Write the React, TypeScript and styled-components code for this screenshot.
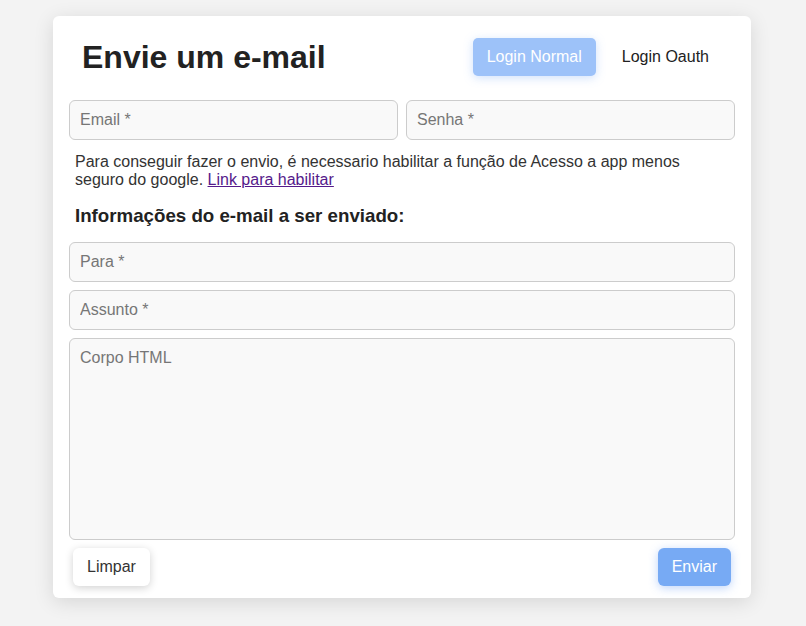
import styled, { createGlobalStyle } from 'styled-components'

const GlobalStyle = createGlobalStyle`
  html, body {
    margin: 0;
    padding: 0;
    background: #f3f3f3;
    font-family: 'Liberation Sans', Arial, sans-serif;
  }
`

const Page = styled.div`
  width: 806px;
  height: 626px;
  padding: 16px 0 0 53px;
  box-sizing: border-box;
  display: flex;
  align-items: flex-start;
`

const Card = styled.form`
  width: 698px;
  height: 582px;
  box-sizing: border-box;
  background: #fff;
  border-radius: 6px;
  box-shadow: 0 4px 20px rgba(0, 0, 0, 0.12);
  padding: 16px 16px 12px;
  display: flex;
  flex-direction: column;
`

const Header = styled.div`
  height: 50px;
  margin-bottom: 18px;
  padding: 0 12px 0 13px;
  display: flex;
  align-items: center;
  justify-content: space-between;
`

const Title = styled.h1`
  margin: 0;
  font-size: 32px;
  font-weight: 700;
  color: #222;
`

const Tabs = styled.div`
  display: flex;
  gap: 12px;
`

const Tab = styled.button<{ $active?: boolean }>`
  font-family: inherit;
  font-size: 16px;
  height: 38px;
  padding: 0 14px;
  border: none;
  border-radius: 5px;
  cursor: pointer;
  background: ${(p) => (p.$active ? '#9dc2f9' : 'transparent')};
  color: ${(p) => (p.$active ? '#fff' : '#222')};
  box-shadow: ${(p) => (p.$active ? '0 2px 10px rgba(120, 170, 245, 0.35)' : 'none')};
`

const Row = styled.div`
  display: grid;
  grid-template-columns: 1fr 1fr;
  gap: 8px;
`

const Input = styled.input`
  width: 100%;
  height: 40px;
  box-sizing: border-box;
  border: 1px solid #ccc;
  border-radius: 6px;
  background: #f9f9f9;
  padding: 0 10px;
  font-family: inherit;
  font-size: 16px;
  color: #222;
  outline: none;

  &::placeholder {
    color: #767676;
  }
`

const Info = styled.p`
  margin: 13px 0 0;
  padding: 0 6px;
  font-size: 16px;
  line-height: normal;
  color: #333;

  a {
    color: #551a8b;
  }
`

const Subtitle = styled.h3`
  margin: 16px 0 15px;
  padding: 0 6px;
  font-size: 18.72px;
  font-weight: 700;
  color: #222;
`

const Fields = styled.div`
  display: flex;
  flex-direction: column;
  gap: 8px;
`

const TextArea = styled.textarea`
  height: 202px;
  box-sizing: border-box;
  border: 1px solid #ccc;
  border-radius: 6px;
  background: #f9f9f9;
  padding: 10px 10px;
  font-family: inherit;
  font-size: 16px;
  resize: none;
  outline: none;

  &::placeholder {
    color: #767676;
  }
`

const Footer = styled.div`
  margin-top: 8px;
  padding: 0 4px;
  display: flex;
  justify-content: space-between;
`

const Button = styled.button<{ $primary?: boolean }>`
  font-family: inherit;
  font-size: 16px;
  height: 38px;
  padding: 0 14px;
  border: none;
  border-radius: 6px;
  cursor: pointer;
  background: ${(p) => (p.$primary ? '#77aaf4' : '#fff')};
  color: ${(p) => (p.$primary ? '#fff' : '#333')};
  box-shadow: ${(p) =>
    p.$primary ? '0 2px 10px rgba(110, 160, 245, 0.45)' : '0 2px 8px rgba(0, 0, 0, 0.18)'};
`

export default function App() {
  return (
    <>
      <GlobalStyle />
      <Page>
        <Card onSubmit={(e) => e.preventDefault()}>
          <Header>
            <Title>Envie um e-mail</Title>
            <Tabs>
              <Tab type="button" $active>Login Normal</Tab>
              <Tab type="button">Login Oauth</Tab>
            </Tabs>
          </Header>
          <Row>
            <Input placeholder="Email *" />
            <Input placeholder="Senha *" type="password" />
          </Row>
          <Info>
            Para conseguir fazer o envio, é necessario habilitar a função de Acesso a app menos
            seguro do google. <a href="#">Link para habilitar</a>
          </Info>
          <Subtitle>Informações do e-mail a ser enviado:</Subtitle>
          <Fields>
            <Input placeholder="Para *" />
            <Input placeholder="Assunto *" />
            <TextArea placeholder="Corpo HTML" />
          </Fields>
          <Footer>
            <Button type="button">Limpar</Button>
            <Button type="submit" $primary>Enviar</Button>
          </Footer>
        </Card>
      </Page>
    </>
  )
}
